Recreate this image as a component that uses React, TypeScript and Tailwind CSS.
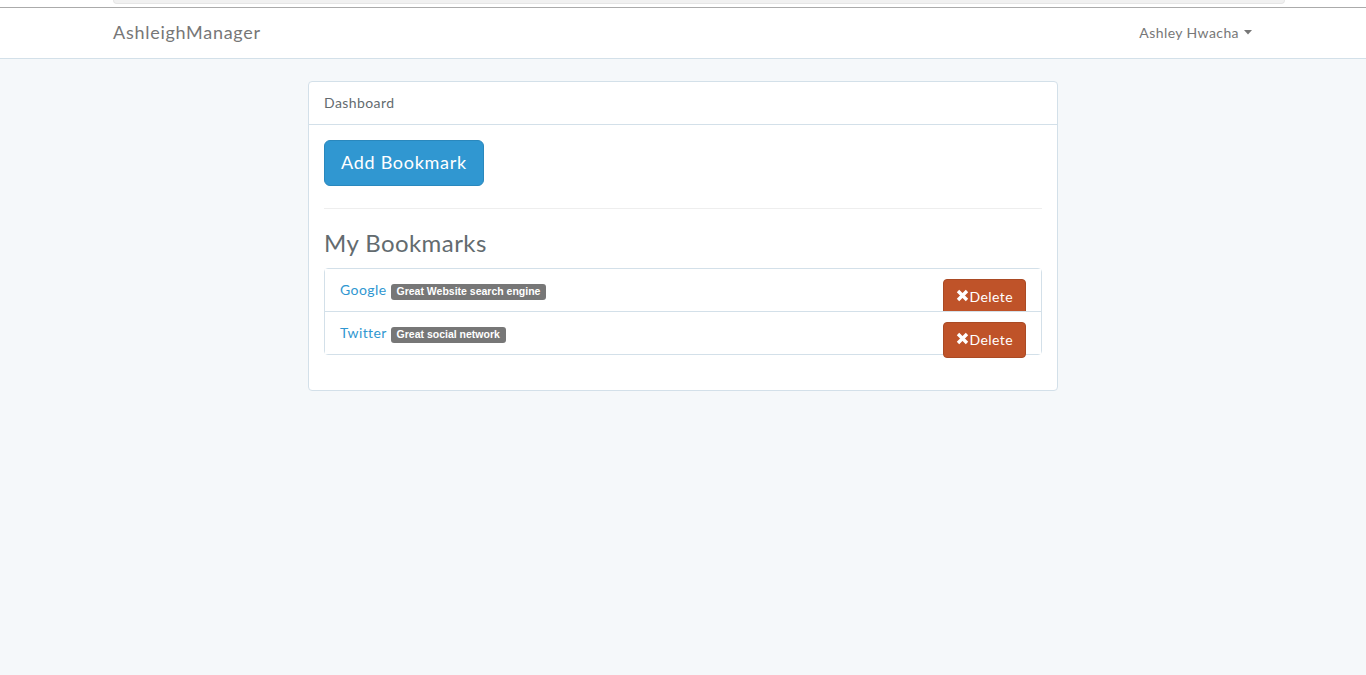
import React from "react";

function RemoveIcon() {
  return (
    <svg width="13" height="13" viewBox="0 0 13 13" className="inline-block mr-[1px] -mt-[2px] align-middle">
      <path d="M2 2 L11 11 M11 2 L2 11" stroke="#fff" strokeWidth="3.4" strokeLinecap="butt" />
    </svg>
  );
}

function DeleteButton() {
  return (
    <button className="float-right h-[36px] px-[12px] rounded-[4px] bg-[#bf5329] border border-[#aa4a24] text-white text-[14px] leading-[22px] flex items-center pb-[1px]">
      <RemoveIcon />
      Delete
    </button>
  );
}

function Item({ name, label }: { name: string; label: string }) {
  return (
    <div className="relative bg-white border-t border-[#d3e0e9] first:border-t-0 h-[43px] first:h-[42px] px-[15px] pt-[10px]">
      <div className="absolute right-[15px] top-[10px]">
        <DeleteButton />
      </div>
      <span className="text-[#3097d1] text-[14px] leading-[22px]">{name}</span>{" "}
      <span className="inline-block bg-[#777] text-white font-['Liberation_Sans',Arial,sans-serif] tracking-normal font-bold text-[10.5px] leading-[1] px-[6px] pt-[2.5px] pb-[3.5px] rounded-[3px] align-[0px]">
        {label}
      </span>
    </div>
  );
}

export default function App() {
  return (
    <div className="min-h-screen bg-[#f5f8fa] font-['Lato',sans-serif] tracking-[0.03em] text-[#636b6f] text-[14px]">
      <div className="h-[7px] bg-white">
        <div className="ml-[113px] w-[1172px] h-[4px] bg-[#f1f1f1] border-b border-x border-[#e6e6e6] rounded-b-[6px]" />
      </div>
      <div className="h-px bg-[#ababab]" />
      <nav className="bg-white border-b border-[#d3e0e9] h-[51px]">
        <div className="w-[1170px] mx-auto px-[15px] h-[50px] flex items-center justify-between pb-[2px]">
          <span className="text-[18px] text-[#777] tracking-[0.04em]">AshleighManager</span>
          <span className="text-[14px] text-[#777] flex items-center">
            Ashley Hwacha
            <svg width="9" height="5" viewBox="0 0 9 5" className="ml-[5px]">
              <path d="M0 0 H8 L4 4.5 Z" fill="#777" />
            </svg>
          </span>
        </div>
      </nav>
      <div className="w-[750px] mx-auto mt-[22px] bg-white border border-[#d3e0e9] rounded-[4px]">
        <div className="h-[43px] border-b border-[#d3e0e9] px-[15px] flex items-center pb-[2px] text-[14px] text-[#636b6f]">
          Dashboard
        </div>
        <div className="px-[15px] pt-[15px] pb-[15px]">
          <button className="h-[46px] px-[16px] rounded-[6px] bg-[#3097d1] border border-[#2a88bd] text-white text-[18px] tracking-[0.04em] pb-[2px]">
            Add Bookmark
          </button>
          <div className="my-[22px] h-px bg-[#eeeeee]" />
          <h3 className="text-[24px] leading-[26px] text-[#636b6f] mb-[11px] mt-[0px] -translate-y-[1px]">My Bookmarks</h3>
          <div className="border border-[#d3e0e9] rounded-[4px] mb-[20px]">
            <Item name="Google" label="Great Website search engine" />
            <Item name="Twitter" label="Great social network" />
          </div>
        </div>
      </div>
    </div>
  );
}
